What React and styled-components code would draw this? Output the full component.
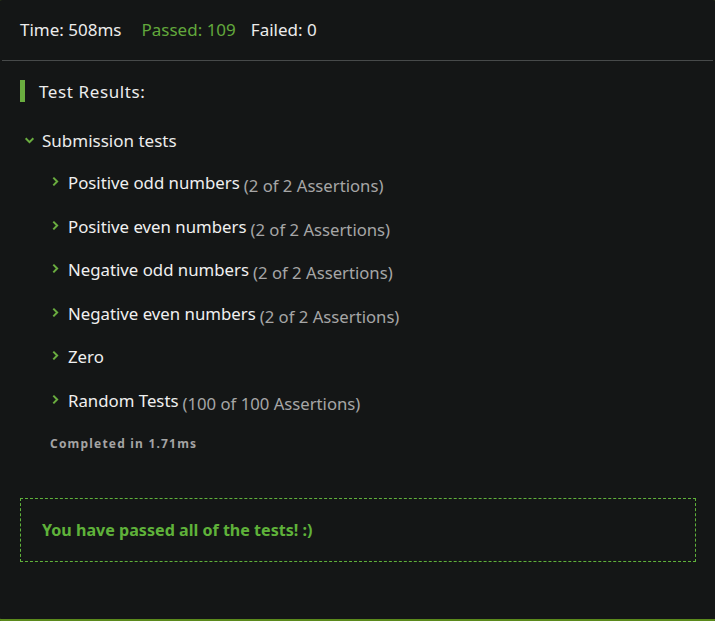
import styled, { createGlobalStyle } from "styled-components"

const GlobalStyle = createGlobalStyle`
    html, body {
        margin: 0;
        padding: 0;
        background: #141616;
        overflow: hidden;
    }

    body {
        font-family: "Noto Sans", "Open Sans", sans-serif;
        color: #e6e6e6;
    }
`

const tests = [
    { name: "Positive odd numbers", note: "(2 of 2 Assertions)" },
    { name: "Positive even numbers", note: "(2 of 2 Assertions)" },
    { name: "Negative odd numbers", note: "(2 of 2 Assertions)" },
    { name: "Negative even numbers", note: "(2 of 2 Assertions)" },
    { name: "Zero" },
    { name: "Random Tests", note: "(100 of 100 Assertions)" },
]

function Chevron({ down }) {
    return (
        <ChevronIcon viewBox="0 0 10 10" $down={down}>
            <polyline points="3,1.5 6.5,5 3,8.5" />
        </ChevronIcon>
    )
}

function App() {
    return (
        <>
            <GlobalStyle />
            <Panel>
                <Stats>
                    <Stat $wide>Time: 508ms</Stat>
                    <Stat $tone="pass">Passed: 109</Stat>
                    <Stat>Failed: 0</Stat>
                </Stats>

                <Results>
                    <Heading>Test Results:</Heading>

                    <Group>
                        <GroupTitle>
                            <Chevron down />
                            Submission tests
                        </GroupTitle>

                        <TestList>
                            {tests.map((t) => (
                                <TestRow key={t.name}>
                                    <Chevron />
                                    <TestName>{t.name}</TestName>
                                    {t.note ? <Note>{t.note}</Note> : null}
                                </TestRow>
                            ))}
                        </TestList>

                        <Completed>Completed in 1.71ms</Completed>
                    </Group>

                    <Success>You have passed all of the tests! :)</Success>
                </Results>
            </Panel>
        </>
    )
}

export default App

const Panel = styled.div`
    box-sizing: border-box;
    height: 623px;
    margin: -2px -8px 0 -8px;
    padding: 2px 8px 0 8px;
    border: 2px solid #5b8a1c;
    border-radius: 10px;
    background: #141616;
    display: flex;
    flex-direction: column;
`

const Stats = styled.div`
    display: flex;
    align-items: center;
    gap: 15px;
    height: 59px;
    padding: 0 0 3px 18px;
    box-sizing: border-box;
    border-bottom: 1px solid #474a4a;
    font-size: 17px;
`

const Stat = styled.span`
    margin-right: ${(p) => (p.$wide ? "5px" : "0")};
    color: ${(p) => (p.$tone === "pass" ? "#62a83c" : "#ececec")};
`

const Results = styled.div`
    display: flex;
    flex-direction: column;
    padding: 19px 18px 0 18px;
`

const Heading = styled.div`
    display: flex;
    align-items: center;
    height: 22px;
    padding-left: 14px;
    border-left: 5px solid #6aad3f;
    font-size: 17px;
    letter-spacing: 0.6px;
    color: #ececec;
`

const Group = styled.div`
    display: flex;
    flex-direction: column;
    margin-top: 26px;
    padding-left: 4px;
`

const GroupTitle = styled.div`
    display: flex;
    align-items: center;
    gap: 7px;
    height: 24px;
    font-size: 17px;
    color: #ececec;
`

const ChevronIcon = styled.svg`
    width: 11px;
    height: 11px;
    flex: none;
    transform: ${(p) => (p.$down ? "rotate(90deg)" : "none")};

    polyline {
        fill: none;
        stroke: #6aad3f;
        stroke-width: 1.8;
    }
`

const TestList = styled.div`
    display: flex;
    flex-direction: column;
    gap: 19.5px;
    margin-top: 21px;
    padding-left: 26px;
`

const TestRow = styled.div`
    display: flex;
    align-items: flex-start;
    height: 24px;
    font-size: 16.8px;

    svg {
        margin-top: 3px;
        margin-right: 7px;
    }
`

const TestName = styled.span`
    color: #f0f0f0;
    line-height: 20px;
`

const Note = styled.span`
    margin-left: 4px;
    margin-top: 3px;
    line-height: 20px;
    font-size: 16.7px;
    color: #a6a6a6;
`

const Completed = styled.div`
    margin-top: 20px;
    padding-left: 26px;
    font-size: 12px;
    font-weight: 700;
    letter-spacing: 1.2px;
    color: #a4a4a4;
`

const Success = styled.div`
    display: flex;
    align-items: center;
    box-sizing: border-box;
    height: 64px;
    margin: 46px -1px 0 0;
    padding-left: 21px;
    border: 1px dashed #5fb23a;
    font-size: 16.1px;
    font-weight: 700;
    color: #5fb23a;
`
